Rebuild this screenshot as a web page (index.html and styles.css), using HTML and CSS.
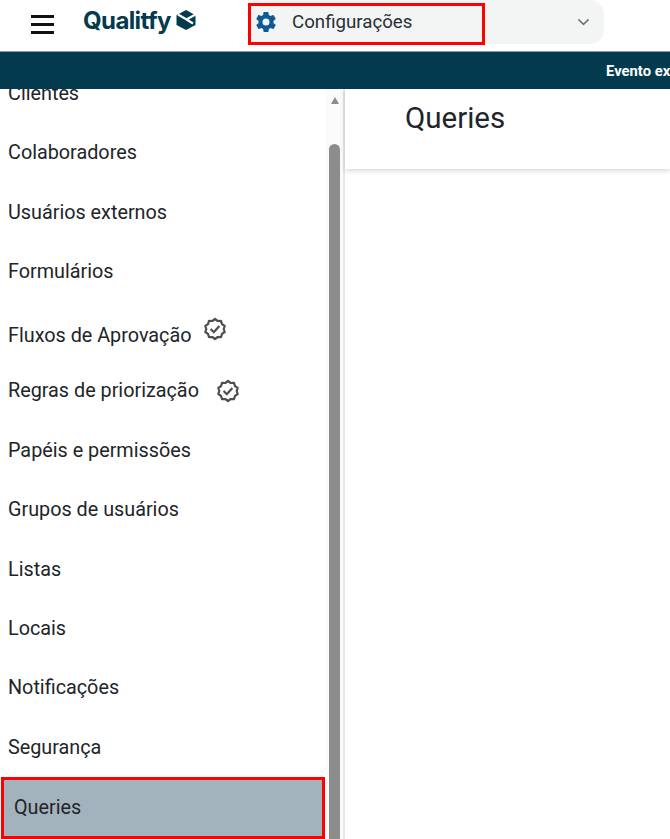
FILE: index.html
```html
<!DOCTYPE html>
<html lang="pt-BR">
<head>
    <meta charset="UTF-8">
    <meta name="viewport" content="width=device-width, initial-scale=1.0">
    <title>Queries</title>
    <link rel="stylesheet" href="styles.css">
</head>
<body>
    <!-- Topo -->
    <header class="topbar">
        <button class="menu-btn" aria-label="Menu">
            <span></span><span></span><span></span>
        </button>
        <div class="logo">
            <span class="logo-text">Qualitfy</span>
            <svg class="logo-mark" viewBox="0 0 20 20" width="20" height="20">
                <path d="M10 0 L19.5 5.2 L19.5 15 L10 20 L0.5 15 L0.5 5.2 Z" fill="#043a4e"/>
                <path d="M2 4.5 L10.5 9.5 L19.5 4.5 M10.5 9.5 L17 13.5" fill="none" stroke="#fff" stroke-width="2.2"/>
            </svg>
        </div>
        <div class="module-select">
            <div class="mark-box"></div>
            <svg class="gear" viewBox="0 0 24 24" width="24" height="24">
                <path fill="#0f5a96" d="M19.4 13c.04-.33.1-.66.1-1s-.06-.67-.1-1l2.1-1.65c.2-.15.25-.42.13-.64l-2-3.46c-.12-.22-.4-.3-.6-.22l-2.5 1c-.52-.4-1.08-.73-1.7-.98l-.37-2.65A.49.49 0 0 0 14 2h-4c-.25 0-.46.18-.5.42l-.37 2.65c-.62.25-1.18.59-1.7.98l-2.5-1c-.22-.08-.48 0-.6.22l-2 3.46c-.13.22-.07.49.12.64L4.57 11c-.04.33-.07.67-.07 1s.03.67.07 1l-2.11 1.65c-.19.15-.25.42-.12.64l2 3.46c.12.22.38.3.6.22l2.5-1c.52.4 1.08.73 1.7.98l.37 2.65c.04.24.25.42.5.42h4c.25 0 .46-.18.5-.42l.37-2.65c.62-.25 1.18-.59 1.7-.98l2.5 1c.22.08.48 0 .6-.22l2-3.46c.12-.22.07-.49-.13-.64L19.4 13zM12 15.5a3.5 3.5 0 1 1 0-7 3.5 3.5 0 0 1 0 7z"/>
            </svg>
            <span class="module-name">Configurações</span>
            <svg class="chevron" viewBox="0 0 14 8" width="13" height="8">
                <path d="M1.5 1.2 L7 6.5 L12.5 1.2" fill="none" stroke="#6f7678" stroke-width="1.7"/>
            </svg>
        </div>
    </header>

    <!-- Faixa de aviso -->
    <div class="banner">
        <span class="banner-text">Evento ex</span>
    </div>

    <div class="content">
        <!-- Menu lateral -->
        <nav class="sidebar">
            <ul class="menu">
                <li class="menu-item">Clientes</li>
                <li class="menu-item">Colaboradores</li>
                <li class="menu-item">Usuários externos</li>
                <li class="menu-item">Formulários</li>
                <li class="menu-item item-fluxos">
                    <span class="item-label">Fluxos de Aprovação</span>
                    <svg class="badge-icon badge-fluxos" viewBox="0 0 24 24" width="24" height="24">
                        <path d="M12 2 L14.7 4 L18 3.9 L19 7.1 L21.7 9 L20.7 12 L21.7 15 L19 16.9 L18 20.1 L14.7 20 L12 22 L9.3 20 L6 20.1 L5 16.9 L2.3 15 L3.3 12 L2.3 9 L5 7.1 L6 3.9 L9.3 4 Z" fill="none" stroke="#4f4f4f" stroke-width="2.2" stroke-linejoin="round"/>
                        <path d="M7.6 12 L10.8 15.2 L16.4 9" fill="none" stroke="#4f4f4f" stroke-width="2.2"/>
                    </svg>
                </li>
                <li class="menu-item item-regras">
                    <span class="item-label">Regras de priorização</span>
                    <svg class="badge-icon badge-regras" viewBox="0 0 24 24" width="24" height="24">
                        <path d="M12 2 L14.7 4 L18 3.9 L19 7.1 L21.7 9 L20.7 12 L21.7 15 L19 16.9 L18 20.1 L14.7 20 L12 22 L9.3 20 L6 20.1 L5 16.9 L2.3 15 L3.3 12 L2.3 9 L5 7.1 L6 3.9 L9.3 4 Z" fill="none" stroke="#4f4f4f" stroke-width="2.2" stroke-linejoin="round"/>
                        <path d="M7.6 12 L10.8 15.2 L16.4 9" fill="none" stroke="#4f4f4f" stroke-width="2.2"/>
                    </svg>
                </li>
                <li class="menu-item">Papéis e permissões</li>
                <li class="menu-item">Grupos de usuários</li>
                <li class="menu-item">Listas</li>
                <li class="menu-item">Locais</li>
                <li class="menu-item">Notificações</li>
                <li class="menu-item">Segurança</li>
                <li class="menu-item active">Queries</li>
            </ul>
            <div class="scrollbar">
                <div class="scroll-arrow"></div>
                <div class="scroll-thumb"></div>
            </div>
        </nav>

        <!-- Conteúdo -->
        <main class="page">
            <div class="page-header">
                <h1 class="page-title">Queries</h1>
            </div>
        </main>
    </div>
</body>
</html>
```

FILE: styles.css
```css
* {
    margin: 0;
    padding: 0;
    box-sizing: border-box;
}

html, body {
    height: 100%;
    overflow: hidden;
}

body {
    display: flex;
    flex-direction: column;
    background: #fff;
    color: #212529;
    font-family: 'Roboto', sans-serif;
}

/* Topo */
.topbar {
    display: flex;
    align-items: flex-start;
    height: 52px;
    flex-shrink: 0;
    background: #fff;
    border-bottom: 1px solid #8d9a9f;
}

.menu-btn {
    display: flex;
    flex-direction: column;
    gap: 5px;
    width: 23px;
    margin: 15px 0 0 31px;
    background: none;
    border: none;
}

.menu-btn span {
    display: block;
    height: 3px;
    background: #111;
}

.logo {
    display: flex;
    align-items: center;
    gap: 5px;
    width: 113px;
    height: 30px;
    margin: 5px 0 0 29px;
}

.logo-text {
    font-family: 'Inter', sans-serif;
    font-size: 24px;
    font-weight: 700;
    letter-spacing: -0.6px;
    color: #043a4e;
}

.logo-mark {
    flex-shrink: 0;
}

.module-select {
    position: relative;
    display: flex;
    align-items: center;
    width: 356px;
    height: 44px;
    margin-left: 52px;
    padding: 0 14px 0 6px;
    background: #f3f5f5;
    border-radius: 0 14px 14px 0;
}

.mark-box {
    position: absolute;
    left: 0;
    top: 3px;
    width: 237px;
    height: 42px;
    border: 3px solid #f00;
}

.gear {
    flex-shrink: 0;
}

.module-name {
    flex: 1;
    margin-left: 14px;
    font-size: 18.7px;
    font-weight: 400;
    color: #2b2f33;
}

/* Faixa */
.banner {
    display: flex;
    height: 37px;
    flex-shrink: 0;
    align-items: center;
    padding-left: 606px;
    background: #043a4e;
    overflow: hidden;
    white-space: nowrap;
}

.banner-text {
    color: #fff;
    font-size: 14.8px;
    font-weight: 700;
}

.content {
    display: flex;
    flex: 1;
    min-height: 0;
}

/* Menu lateral */
.sidebar {
    display: flex;
    width: 345px;
    flex-shrink: 0;
    border-right: 2px solid #e4e6e7;
    overflow: hidden;
}

.menu {
    width: 326px;
    flex-shrink: 0;
    margin-top: -25.2px;
    list-style: none;
}

.menu-item {
    display: flex;
    align-items: center;
    height: 59.4px;
    padding-left: 8px;
    font-size: 19.8px;
    color: #212529;
    white-space: nowrap;
}

.item-fluxos {
    height: 61.2px;
    padding-top: 7px;
}

.item-regras {
    height: 58px;
    padding-bottom: 3px;
}

.badge-icon {
    flex-shrink: 0;
}

.badge-fluxos {
    margin: -12px 0 0 12px;
}

.badge-regras {
    margin: 2px 0 0 17px;
}

.menu-item.active {
    height: 62px;
    margin: 0 1px;
    padding-left: 10px;
    background: #a3b3bd;
    border: 3px solid #f00;
}

.scrollbar {
    display: flex;
    flex-direction: column;
    align-items: center;
    width: 17px;
    background: #fafafa;
}

.scroll-arrow {
    width: 0;
    height: 0;
    margin-top: 8px;
    border-left: 4.5px solid transparent;
    border-right: 4.5px solid transparent;
    border-bottom: 7px solid #8c8c8c;
}

.scroll-thumb {
    width: 11px;
    flex: 1;
    margin-top: 40px;
    background: #8c8c8c;
    border-radius: 6px 6px 0 0;
}

/* Conteúdo */
.page {
    flex: 1;
    min-width: 0;
}

.page-header {
    height: 80px;
    padding: 12px 0 0 60px;
    background: #fff;
    box-shadow: 0 2px 5px rgba(0, 0, 0, 0.16);
}

.page-title {
    font-size: 29.5px;
    font-weight: 400;
    color: #212529;
}
```
